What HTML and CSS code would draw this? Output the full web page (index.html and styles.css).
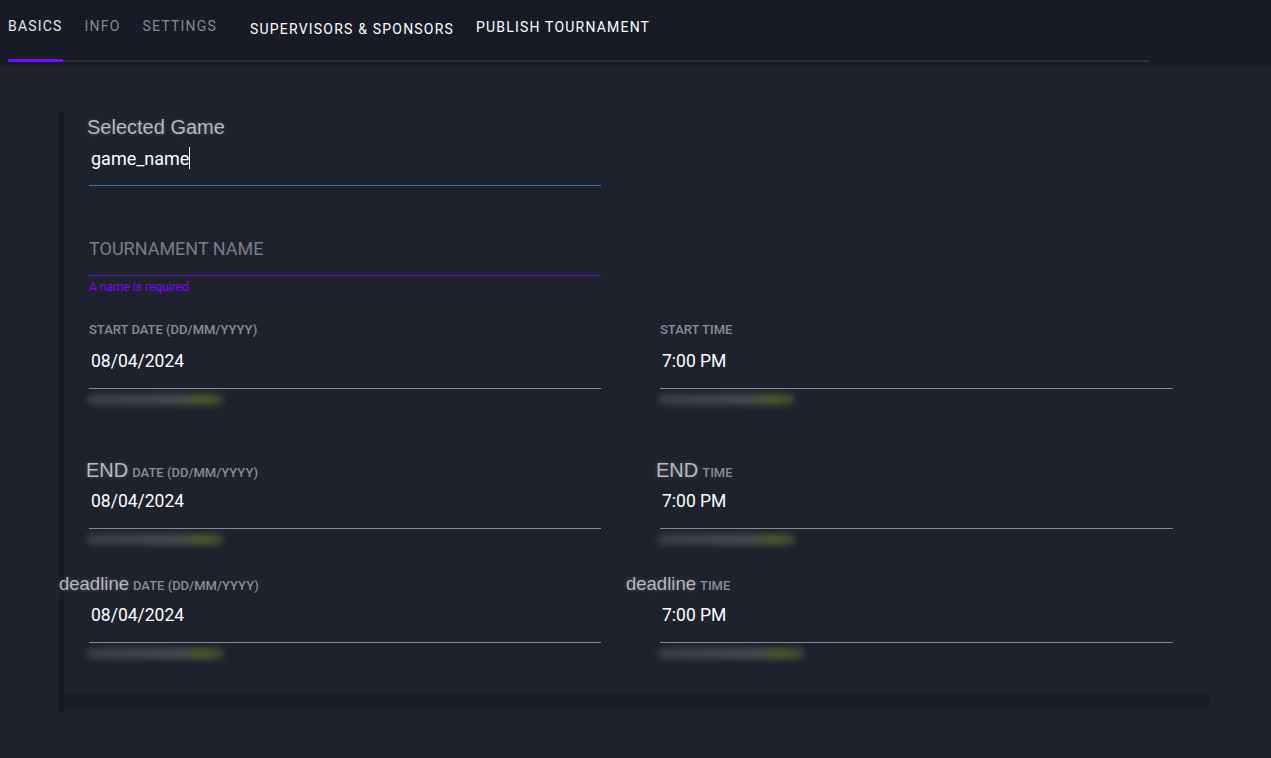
FILE: index.html
```html
<!DOCTYPE html>
<html lang="en">
<head>
<meta charset="utf-8">
<title>Tournament - Basics</title>
<link rel="stylesheet" href="styles.css">
</head>
<body>
<header class="topbar">
  <nav class="tabs">
    <span class="tab active">Basics</span>
    <span class="tab muted">Info</span>
    <span class="tab muted">Settings</span>
    <span class="tab strong sponsors">Supervisors &amp; Sponsors</span>
    <span class="tab strong">Publish Tournament</span>
  </nav>
</header>
<main class="page">
  <section class="panel">
    <div class="card">
      <div class="game-field">
        <div class="game-label">Selected Game</div>
        <div class="text-input focused">game_name<span class="caret"></span></div>
      </div>
      <div class="name-field">
        <div class="text-input placeholder invalid">TOURNAMENT NAME</div>
        <div class="error">A name is required</div>
      </div>

      <div class="dt-row row-start">
        <div class="dt">
          <div class="dt-label">Start date (DD/MM/YYYY)</div>
          <div class="dt-value">08/04/2024</div>
          <div class="hint"></div>
        </div>
        <div class="dt">
          <div class="dt-label">Start time</div>
          <div class="dt-value">7:00 PM</div>
          <div class="hint"></div>
        </div>
      </div>

      <div class="dt-row row-end">
        <div class="dt">
          <div class="dt-label"><span class="word word-end">END</span>Date (DD/MM/YYYY)</div>
          <div class="dt-value">08/04/2024</div>
          <div class="hint"></div>
        </div>
        <div class="dt">
          <div class="dt-label"><span class="word word-end word-right">END</span>Time</div>
          <div class="dt-value">7:00 PM</div>
          <div class="hint"></div>
        </div>
      </div>

      <div class="dt-row row-deadline">
        <div class="dt">
          <div class="dt-label"><span class="word word-deadline">deadline</span>Date (DD/MM/YYYY)</div>
          <div class="dt-value">08/04/2024</div>
          <div class="hint"></div>
        </div>
        <div class="dt">
          <div class="dt-label"><span class="word word-deadline word-right">deadline</span>Time</div>
          <div class="dt-value">7:00 PM</div>
          <div class="hint hint-wide"></div>
        </div>
      </div>
    </div>
    <div class="card-foot"></div>
  </section>
</main>
</body>
</html>
```

FILE: styles.css
```css
* { box-sizing: border-box; }

html, body {
  margin: 0;
  padding: 0;
}

body {
  background: #1d222d;
  font-family: Roboto, "Liberation Sans", sans-serif;
  color: #ffffff;
  min-height: 758px;
}

/* ---------- top tab bar ---------- */
.topbar {
  height: 66px;
  background: #161b26;
}

.tabs {
  width: 1141px;
  margin-left: 8px;
  height: 62px;
  display: flex;
  gap: 22px;
  border-bottom: 2px solid #2a2f3a;
}

.tab {
  position: relative;
  padding-top: 18px;
  font-size: 14px;
  line-height: 16px;
  letter-spacing: 1.2px;
  text-transform: uppercase;
  white-space: nowrap;
  color: #e6e6e8;
}

.tab.muted { color: #868993; }

.tab.strong {
  color: #ffffff;
  padding-top: 19px;
}

.tab.sponsors {
  margin-left: 11px;
  padding-top: 21px;
}

.tab.active::after {
  content: "";
  position: absolute;
  left: 0;
  right: 0;
  bottom: -2px;
  height: 3px;
  background: #7b0bff;
  border-radius: 1px;
}

/* ---------- page / card ---------- */
.page {
  padding-top: 46px;
}

.panel {
  margin-left: 59px;
  width: 1150px;
  border-left: 5px solid #161b26;
  padding-bottom: 6px;
}

.card {
  background: #1d222d;
  padding: 4px 36px 35px 25px;
}

.card-foot {
  height: 13px;
  background: #171c27;
}

/* selected game */
.game-field {
  width: 512px;
}

.game-label {
  font-family: "Liberation Sans", Arial, sans-serif;
  font-size: 20px;
  line-height: 23px;
  color: #b8babe;
  margin-left: -2px;
  text-shadow: 0 0 5px rgba(150, 150, 150, 0.35);
}

.text-input {
  margin-top: 8px;
  padding: 0 0 14px 2px;
  font-size: 18px;
  line-height: 24px;
  color: #ffffff;
  border-bottom: 1px solid #8a8d95;
}

.text-input.focused {
  border-bottom-color: #3576c0;
}

.caret {
  display: inline-block;
  width: 1px;
  height: 22px;
  background: #ffffff;
  vertical-align: -4px;
}

/* tournament name */
.name-field {
  width: 512px;
  margin-top: 52px;
}

.text-input.placeholder {
  margin-top: 0;
  padding: 0 0 16px 0;
  font-size: 18px;
  line-height: 21px;
  color: #7b7e88;
}

.text-input.invalid {
  border-bottom-color: #6413c0;
}

.error {
  margin-top: 4px;
  font-size: 12px;
  line-height: 14px;
  color: #8400ff;
}

/* date / time rows */
.dt-row {
  display: grid;
  grid-template-columns: 512px 513px;
  column-gap: 59px;
}

.row-start { margin-top: 29px; }
.row-end { margin-top: 58px; }
.row-deadline { margin-top: 32px; }

.dt-label {
  height: 14px;
  font-size: 13px;
  line-height: 14px;
  font-weight: 500;
  text-transform: uppercase;
  color: #8a8d96;
  white-space: nowrap;
}

.word {
  font-family: "Liberation Sans", Arial, sans-serif;
  font-weight: 400;
  text-transform: none;
  line-height: 14px;
  color: #b8babe;
  margin-right: 4px;
  text-shadow: 0 0 5px rgba(150, 150, 150, 0.4);
}

.word-end {
  font-size: 20px;
  margin-left: -3px;
}

.word-end.word-right { margin-left: -4px; }

.word-deadline {
  font-size: 18.5px;
  margin-left: -30px;
}

.word-deadline.word-right { margin-left: -34px; }

.dt-value {
  margin-top: 14px;
  padding: 0 0 17px 2px;
  font-size: 17.5px;
  line-height: 20px;
  color: #ffffff;
  border-bottom: 1px solid #8a8c93;
}

.hint {
  margin-top: 5px;
  margin-left: -2px;
  width: 137px;
  height: 11px;
  border-radius: 6px;
  background: linear-gradient(90deg, #3a3e48 0%, #454952 65%, #4a5a2a 85%, #3c4334 100%);
  filter: blur(3px);
}

.hint-wide { width: 146px; }
```
